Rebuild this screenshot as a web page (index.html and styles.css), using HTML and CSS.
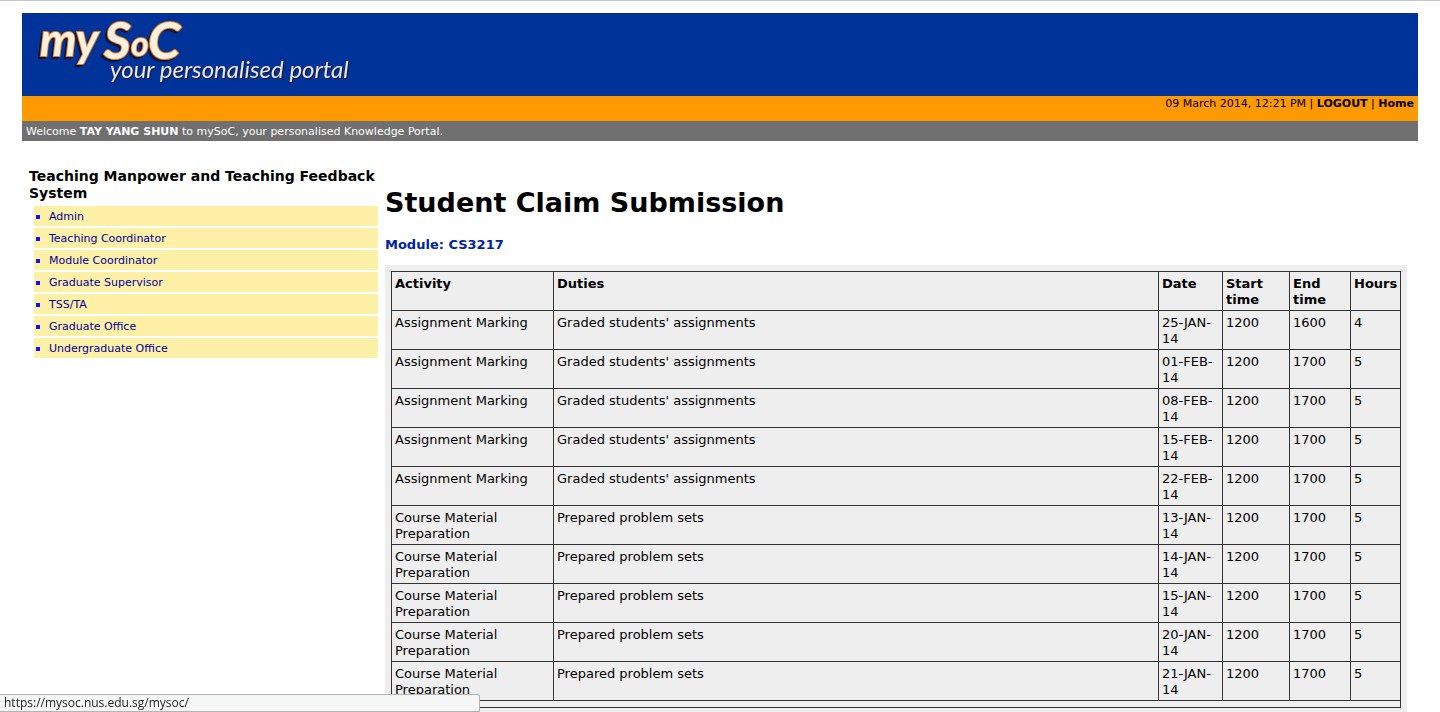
FILE: index.html
```html
<!DOCTYPE html>
<html lang="en">
<head>
<meta charset="utf-8">
<title>mySoC - Student Claim Submission</title>
<link rel="stylesheet" href="styles.css">
</head>
<body>
<header class="banner">
  <div class="brand">
    <svg class="logo" viewBox="0 0 340 83" role="img" aria-label="mySoC your personalised portal">
      <text class="logo-name" x="18" y="43">my<tspan class="logo-cap" x="82" y="46">S</tspan><tspan class="logo-small" x="109" y="43">o</tspan><tspan class="logo-cap" x="126" y="46">C</tspan></text>
      <text class="logo-tagline" x="88" y="65">your personalised portal</text>
    </svg>
  </div>
  <nav class="userbar">09 March 2014, 12:21 PM | <a href="#logout">LOGOUT</a> | <a href="#home">Home</a></nav>
  <p class="welcome">Welcome <strong>TAY YANG SHUN</strong> to mySoC, your personalised Knowledge Portal.</p>
</header>
<div class="columns">
  <nav class="sidebar">
    <h2 class="sidebar-title">Teaching Manpower and Teaching Feedback System</h2>
    <ul class="menu">
      <li><a href="#admin">Admin</a></li>
      <li><a href="#tc">Teaching Coordinator</a></li>
      <li><a href="#mc">Module Coordinator</a></li>
      <li><a href="#gs">Graduate Supervisor</a></li>
      <li><a href="#ta">TSS/TA</a></li>
      <li><a href="#go">Graduate Office</a></li>
      <li><a href="#uo">Undergraduate Office</a></li>
    </ul>
  </nav>
  <main class="content">
    <h1 class="title">Student Claim Submission</h1>
    <p class="module">Module: CS3217</p>
    <div class="panel">
      <table class="claims">
        <colgroup><col class="c-activity"><col class="c-duties"><col class="c-date"><col class="c-start"><col class="c-end"><col class="c-hours"></colgroup>
        <thead>
          <tr><th scope="col">Activity</th><th scope="col">Duties</th><th scope="col">Date</th><th scope="col">Start time</th><th scope="col">End time</th><th scope="col">Hours</th></tr>
        </thead>
        <tbody>
          <tr><td>Assignment Marking</td><td>Graded students' assignments</td><td>25-JAN-<wbr>14</td><td>1200</td><td>1600</td><td>4</td></tr>
          <tr><td>Assignment Marking</td><td>Graded students' assignments</td><td>01-FEB-<wbr>14</td><td>1200</td><td>1700</td><td>5</td></tr>
          <tr><td>Assignment Marking</td><td>Graded students' assignments</td><td>08-FEB-<wbr>14</td><td>1200</td><td>1700</td><td>5</td></tr>
          <tr><td>Assignment Marking</td><td>Graded students' assignments</td><td>15-FEB-<wbr>14</td><td>1200</td><td>1700</td><td>5</td></tr>
          <tr><td>Assignment Marking</td><td>Graded students' assignments</td><td>22-FEB-<wbr>14</td><td>1200</td><td>1700</td><td>5</td></tr>
          <tr><td>Course Material Preparation</td><td>Prepared problem sets</td><td>13-JAN-<wbr>14</td><td>1200</td><td>1700</td><td>5</td></tr>
          <tr><td>Course Material Preparation</td><td>Prepared problem sets</td><td>14-JAN-<wbr>14</td><td>1200</td><td>1700</td><td>5</td></tr>
          <tr><td>Course Material Preparation</td><td>Prepared problem sets</td><td>15-JAN-<wbr>14</td><td>1200</td><td>1700</td><td>5</td></tr>
          <tr><td>Course Material Preparation</td><td>Prepared problem sets</td><td>20-JAN-<wbr>14</td><td>1200</td><td>1700</td><td>5</td></tr>
          <tr><td>Course Material Preparation</td><td>Prepared problem sets</td><td>21-JAN-<wbr>14</td><td>1200</td><td>1700</td><td>5</td></tr>
          <tr><td colspan="6"></td></tr>
        </tbody>
      </table>
    </div>
  </main>
</div>
<div class="status">https://mysoc.nus.edu.sg/mysoc/</div>
</body>
</html>
```
FILE: styles.css
```css
* { box-sizing: border-box; }
body {
  margin: 0;
  padding: 12px 22px 0;
  border-top: 1px solid #c4c4c4;
  background: #fff;
  color: #000;
  font-family: Verdana, "DejaVu Sans", sans-serif;
  font-size: 13px;
  line-height: 16px;
}
a { text-decoration: none; }
.brand { height: 83px; background: #003399; }
.logo { display: block; width: 340px; height: 83px; }
.logo-name {
  font: italic 700 46px Lato, sans-serif;
  fill: #f8f1e2;
  stroke: #e87d18;
  stroke-width: 2px;
  paint-order: stroke;
  filter: drop-shadow(-2px 2px 0 #10153f);
}
.logo-cap { font-size: 52px; }
.logo-small { font-size: 34px; }
.logo-tagline {
  font: italic 400 24px Lato, sans-serif;
  fill: #e9e7e4;
  filter: drop-shadow(1px 1px 0 #151533);
}
.userbar {
  height: 25px;
  padding-right: 4px;
  background: #ff9900;
  font-size: 11px;
  line-height: 16px;
  text-align: right;
}
.userbar a { color: #000; font-weight: 700; }
.welcome {
  margin: 0;
  padding: 1px 4px 0;
  background: #707070;
  color: #fff;
  font-size: 11px;
  line-height: 19px;
}
.columns { display: flex; gap: 7px; padding: 27px 11px 0 7px; }
.sidebar { flex: 0 0 349px; }
.sidebar-title { margin: 0; font-size: 14px; line-height: 17px; }
.menu {
  display: grid;
  gap: 2px;
  margin: 4px 0 0 5px;
  padding: 0;
  list-style: none;
}
.menu li {
  display: flex;
  align-items: center;
  gap: 9px;
  padding-left: 2px;
  background: #fff0a8;
  font-size: 11px;
  line-height: 20px;
}
.menu li::before { content: ""; width: 4px; height: 4px; margin-top: 2px; background: #1010ff; }
.menu a { padding-top: 1px; line-height: 19px; color: #000099; }
.content { flex: 1; min-width: 0; }
.title { margin: 18px 0 0; font-size: 27px; line-height: 34px; }
.module { margin: 17px 0 12px; color: #0022a4; font-weight: 700; }
.panel { padding: 6px; background: #eee; }
.claims { width: 100%; border-collapse: collapse; table-layout: fixed; }
.claims th, .claims td {
  padding: 4px 3px 2px;
  border: 1px solid #333;
  text-align: left;
  vertical-align: top;
}
.c-activity { width: 162px; }
.c-date { width: 64px; }
.c-start { width: 67px; }
.c-end { width: 61px; }
.c-hours { width: 50px; }
.status {
  position: fixed;
  left: 0;
  bottom: 0;
  width: 480px;
  height: 18px;
  padding-left: 4px;
  border: 1px solid #b4b4b4;
  border-left: 0;
  border-top-right-radius: 3px;
  background: #f5f7f7;
  color: #222;
  font: 12px/16px "Open Sans", sans-serif;
}
```
